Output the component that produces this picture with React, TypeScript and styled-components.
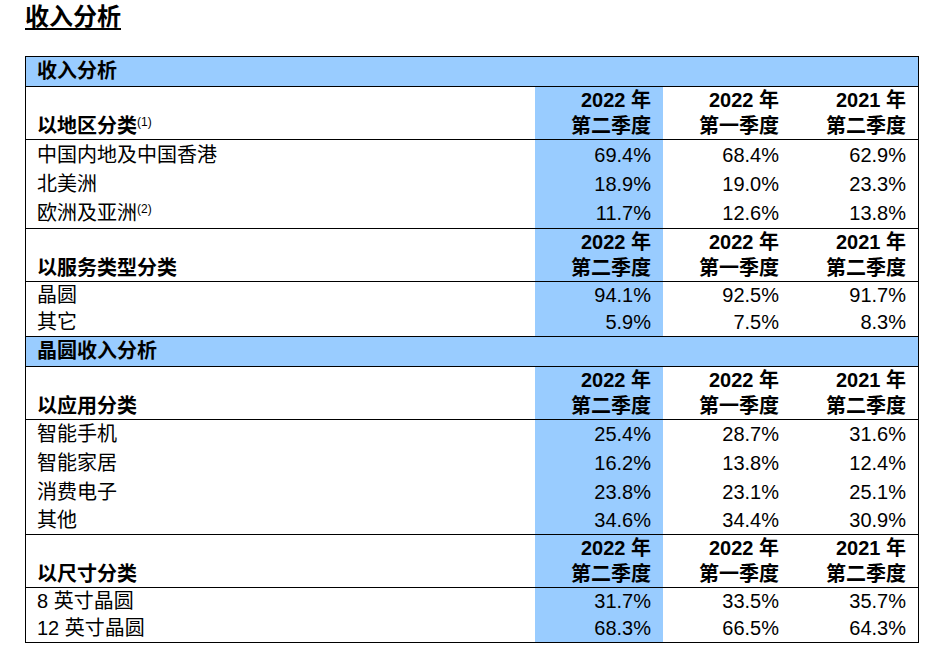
import styled, { createGlobalStyle } from 'styled-components'

const GlobalStyle = createGlobalStyle`
  body {
    margin: 0;
    background: #ffffff;
    color: #000000;
    font-family: 'Liberation Sans', 'Noto Sans CJK SC', sans-serif;
  }
`

const BLUE = '#99ccff'

const Page = styled.div`
  padding-left: 25px;
  width: 894px;
`

const Title = styled.h1`
  margin: 0 0 22px;
  font-size: 24px;
  line-height: 34px;
  font-weight: bold;

  span {
    text-decoration: underline;
    text-decoration-thickness: 2px;
    text-underline-offset: 3px;
  }
`

const Table = styled.div`
  border: 1px solid #000;
  font-size: 20px;
`

const Band = styled.div`
  background: ${BLUE};
  height: 29px;
  line-height: 29px;
  padding-left: 11px;
  font-weight: bold;
  border-bottom: 1px solid #000;
`

const Group = styled.div<{ $last?: boolean }>`
  border-bottom: ${({ $last }) => ($last ? 'none' : '1px solid #000')};
`

const Row = styled.div<{ $h: number }>`
  display: grid;
  grid-template-columns: 509px 128px 128px 1fr;
  height: ${({ $h }) => $h}px;
  line-height: ${({ $h }) => $h}px;
`

const HeadRow = styled(Row)`
  font-weight: bold;
  line-height: 26px;
`

const Label = styled.div<{ $bottom?: boolean }>`
  padding-left: 11px;
  align-self: ${({ $bottom }) => ($bottom ? 'end' : 'stretch')};
  white-space: nowrap;
`

const Value = styled.div<{ $hl?: boolean }>`
  background: ${({ $hl }) => ($hl ? BLUE : 'transparent')};
  text-align: right;
  padding-right: 12px;
  display: flex;
  flex-direction: column;
  justify-content: flex-end;
  align-items: flex-end;
`

const Sup = styled.sup`
  font-size: 12px;
  font-weight: normal;
  vertical-align: 7px;
  line-height: 0;
`

const HeadLabel = styled.span`
  font-weight: bold;
`

type Section = {
  band?: string
  label: string
  note?: string
  rows: { name: string; v: [string, string, string]; h: number }[]
}

const periods: [string, string][] = [
  ['2022 年', '第二季度'],
  ['2022 年', '第一季度'],
  ['2021 年', '第二季度'],
]

const sections: Section[] = [
  {
    band: '收入分析',
    label: '以地区分类',
    note: '(1)',
    rows: [
      { name: '中国内地及中国香港', v: ['69.4%', '68.4%', '62.9%'], h: 30 },
      { name: '北美洲', v: ['18.9%', '19.0%', '23.3%'], h: 29 },
      { name: '欧洲及亚洲', v: ['11.7%', '12.6%', '13.8%'], h: 29 },
    ],
  },
  {
    label: '以服务类型分类',
    rows: [
      { name: '晶圆', v: ['94.1%', '92.5%', '91.7%'], h: 27 },
      { name: '其它', v: ['5.9%', '7.5%', '8.3%'], h: 27 },
    ],
  },
  {
    band: '晶圆收入分析',
    label: '以应用分类',
    rows: [
      { name: '智能手机', v: ['25.4%', '28.7%', '31.6%'], h: 29 },
      { name: '智能家居', v: ['16.2%', '13.8%', '12.4%'], h: 29 },
      { name: '消费电子', v: ['23.8%', '23.1%', '25.1%'], h: 28 },
      { name: '其他', v: ['34.6%', '34.4%', '30.9%'], h: 28 },
    ],
  },
  {
    label: '以尺寸分类',
    rows: [
      { name: '8 英寸晶圆', v: ['31.7%', '33.5%', '35.7%'], h: 27 },
      { name: '12 英寸晶圆', v: ['68.3%', '66.5%', '64.3%'], h: 27 },
    ],
  },
]

const notes: Record<string, string> = { 欧洲及亚洲: '(2)' }

export default function App() {
  return (
    <Page>
      <GlobalStyle />
      <Title>
        <span>收入分析</span>
      </Title>
      <Table>
        {sections.map((s, si) => (
          <div key={s.label}>
            {s.band && <Band>{s.band}</Band>}
            <Group>
              <HeadRow $h={52}>
                <Label $bottom>
                  <HeadLabel>{s.label}</HeadLabel>
                  {s.note && <Sup>{s.note}</Sup>}
                </Label>
                {periods.map(([y, q], i) => (
                  <Value key={i} $hl={i === 0}>
                    <div>{y}</div>
                    <div>{q}</div>
                  </Value>
                ))}
              </HeadRow>
            </Group>
            <Group $last={si === sections.length - 1}>
              {s.rows.map((r) => (
                <Row key={r.name} $h={r.h}>
                  <Label>
                    {r.name}
                    {notes[r.name] && <Sup>{notes[r.name]}</Sup>}
                  </Label>
                  {r.v.map((v, i) => (
                    <Value key={i} $hl={i === 0}>
                      {v}
                    </Value>
                  ))}
                </Row>
              ))}
            </Group>
          </div>
        ))}
      </Table>
    </Page>
  )
}
